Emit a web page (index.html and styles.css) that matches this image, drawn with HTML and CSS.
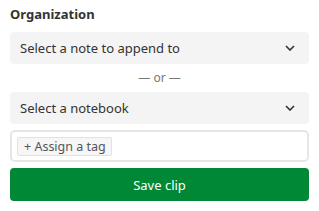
FILE: index.html
```html
<!DOCTYPE html>
<html>
<head>
  <title>Organization</title>
  <link rel="stylesheet" href="styles.css">
</head>
<body>
  <div class="panel">
    <div class="section-title">Organization</div>
    <div class="select">
      <span>Select a note to append to</span>
      <svg class="chevron" width="10" height="6" viewBox="0 0 10 6"><path d="M1 1l4 4 4-4" fill="none" stroke="#333" stroke-width="1.6"/></svg>
    </div>
    <div class="divider">&mdash; or &mdash;</div>
    <div class="select">
      <span>Select a notebook</span>
      <svg class="chevron" width="10" height="6" viewBox="0 0 10 6"><path d="M1 1l4 4 4-4" fill="none" stroke="#333" stroke-width="1.6"/></svg>
    </div>
    <div class="tag-box">
      <span class="tag-btn">+ Assign a tag</span>
    </div>
    <button class="save-btn">Save clip</button>
  </div>
</body>
</html>
```
FILE: styles.css
```css
body {
  margin: 0;
  padding: 0;
  background: #fff;
  font-family: "Noto Sans", sans-serif;
  color: #333;
}

.panel {
  padding: 4px 10px 10px 10px;
  display: flex;
  flex-direction: column;
}

.section-title {
  font-size: 13px;
  font-weight: bold;
  line-height: 20px;
  margin-bottom: 8px;
}

.select {
  height: 32px;
  background: #f4f4f4;
  border-radius: 4px;
  padding: 0 10px;
  display: flex;
  align-items: center;
  justify-content: space-between;
  font-size: 13px;
}

.chevron {
  margin-right: 4px;
}

.divider {
  text-align: center;
  font-size: 12px;
  color: #777;
  line-height: 28px;
}

.tag-box {
  margin-top: 6px;
  height: 28px;
  border: 2px solid #e6e6e6;
  border-radius: 5px;
  display: flex;
  align-items: center;
  padding: 0 5px;
}

.tag-btn {
  font-size: 12.5px;
  color: #555;
  background: #f6f6f6;
  border: 1px solid #e2e2e2;
  border-radius: 2px;
  padding: 0 5px 0 6px;
  line-height: 17px;
}

.save-btn {
  margin-top: 6px;
  height: 33px;
  border: none;
  border-radius: 4px;
  background: #008837;
  color: #fff;
  font-family: "Noto Sans", sans-serif;
  font-size: 13px;
}
```
